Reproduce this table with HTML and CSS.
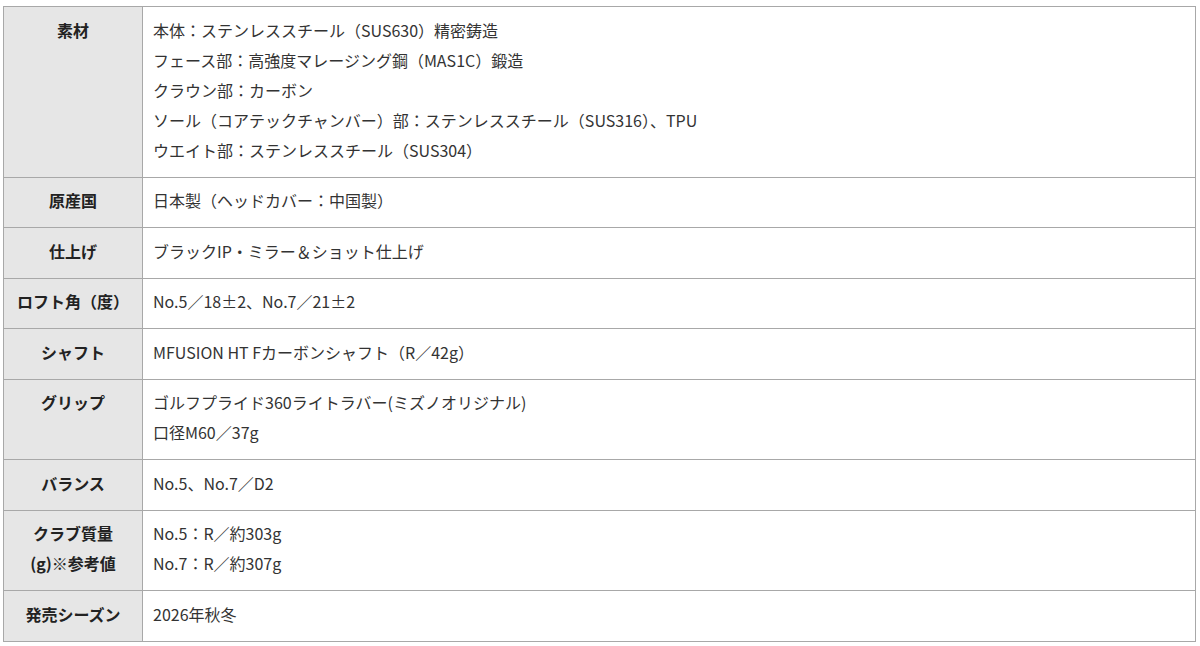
FILE: index.html
```html
<!DOCTYPE html>
<html lang="ja">
<head>
<meta charset="utf-8">
<title>スペック</title>
<link rel="stylesheet" href="styles.css">
</head>
<body>
<table class="spec">
  <colgroup><col class="col-label"><col class="col-value"></colgroup>
  <tbody>
    <tr>
      <th>素材</th>
      <td>本体：ステンレススチール（SUS630）精密鋳造<br>フェース部：高強度マレージング鋼（MAS1C）鍛造<br>クラウン部：カーボン<br>ソール（コアテックチャンバー）部：ステンレススチール（SUS316）、TPU<br>ウエイト部：ステンレススチール（SUS304）</td>
    </tr>
    <tr>
      <th>原産国</th>
      <td>日本製（ヘッドカバー：中国製）</td>
    </tr>
    <tr>
      <th>仕上げ</th>
      <td>ブラックIP・ミラー＆ショット仕上げ</td>
    </tr>
    <tr>
      <th>ロフト角（度）</th>
      <td>No.5／18±2、No.7／21±2</td>
    </tr>
    <tr>
      <th>シャフト</th>
      <td>MFUSION HT Fカーボンシャフト（R／42g）</td>
    </tr>
    <tr>
      <th>グリップ</th>
      <td>ゴルフプライド360ライトラバー(ミズノオリジナル)<br>口径M60／37g</td>
    </tr>
    <tr>
      <th>バランス</th>
      <td>No.5、No.7／D2</td>
    </tr>
    <tr>
      <th>クラブ質量<br>(g)※参考値</th>
      <td>No.5：R／約303g<br>No.7：R／約307g</td>
    </tr>
    <tr>
      <th>発売シーズン</th>
      <td>2026年秋冬</td>
    </tr>
  </tbody>
</table>
</body>
</html>
```

FILE: styles.css
```css
html, body {
  margin: 0;
  padding: 0;
  background: #ffffff;
}

body {
  padding: 6px 0 0 3px;
  font-family: "Noto Sans CJK JP", "Noto Sans", sans-serif;
  font-size: 16px;
  color: #333333;
}

.spec {
  border-collapse: collapse;
  table-layout: fixed;
  width: 1193px;
  border: 1px solid #a8a8a8;
}

.col-label {
  width: 139px;
}

.spec th,
.spec td {
  border: 1px solid #a8a8a8;
  padding: 7.5px 10px 12px;
  line-height: 30px;
  vertical-align: top;
}

.spec th {
  background: #e6e6e6;
  font-weight: bold;
  text-align: center;
  color: #222222;
  padding-left: 4px;
  padding-right: 4px;
  white-space: nowrap;
}

.spec td {
  text-align: left;
  font-weight: normal;
}
```
